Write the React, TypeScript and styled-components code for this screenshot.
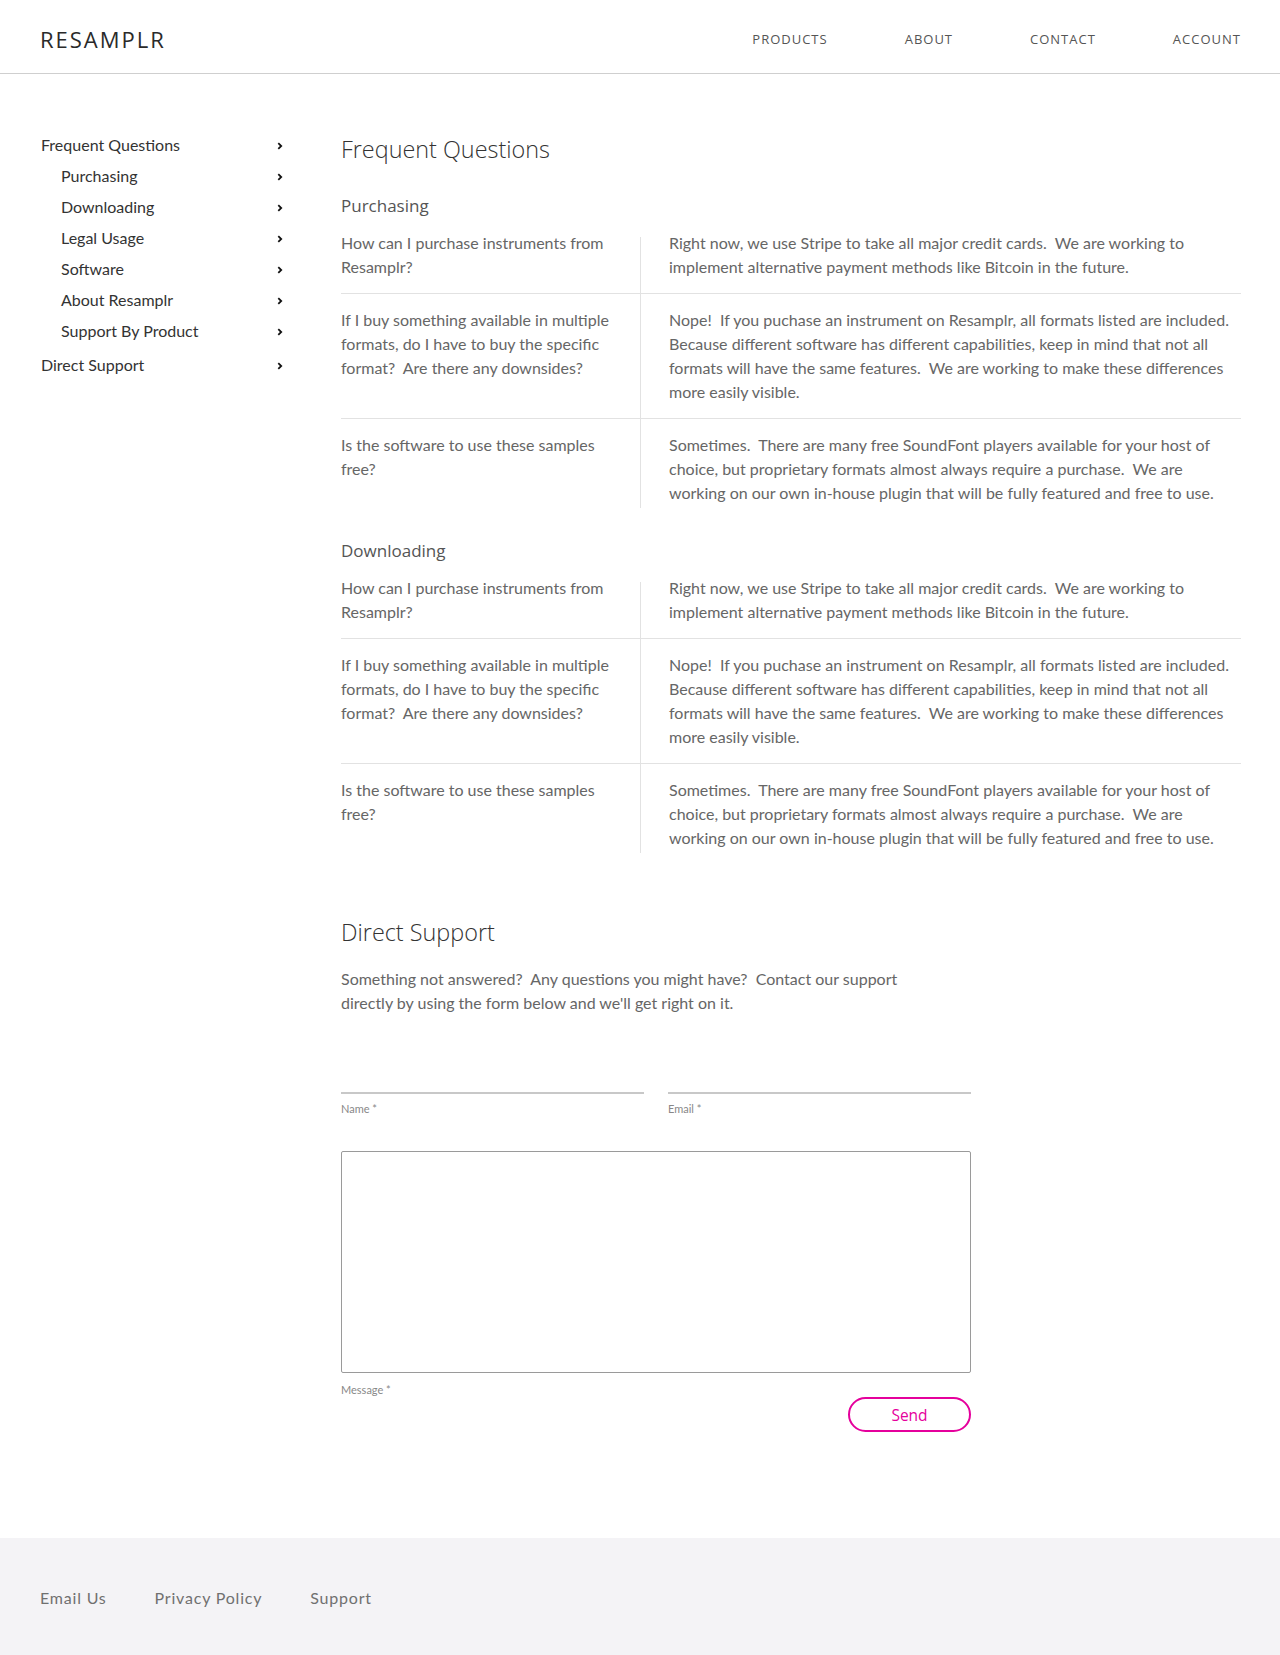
import React from "react";
import styled, { createGlobalStyle } from "styled-components";

const GlobalStyle = createGlobalStyle`
  html, body { margin: 0; padding: 0; background: #fff; }
  body { font-family: "Lato", "Open Sans", sans-serif; color: #333; }
  * { box-sizing: border-box; }
`;

const Header = styled.header`
  height: 74px;
  border-bottom: 1px solid #cfcfcf;
  display: flex;
  align-items: center;
  justify-content: space-between;
  padding: 5px 39px 0 40px;
`;

const Logo = styled.div`
  font-family: "Open Sans", sans-serif;
  font-size: 22px;
  letter-spacing: 2px;
  color: #2a2a2a;
  font-weight: 400;
`;

const Nav = styled.nav`
  display: flex;
  gap: 77px;
`;

const NavLink = styled.a`
  font-family: "Open Sans", sans-serif;
  font-size: 13px;
  letter-spacing: 1px;
  color: #555;
  text-decoration: none;
`;

const Body = styled.div`
  display: flex;
  gap: 60px;
  padding: 55px 39px 106px 41px;
`;

const Sidebar = styled.aside`
  width: 240px;
  flex-shrink: 0;
  display: flex;
  flex-direction: column;
`;

const SideItem = styled.a<{ $indent?: boolean; $gap?: number }>`
  display: flex;
  align-items: center;
  justify-content: space-between;
  height: 31px;
  padding-left: ${(p) => (p.$indent ? "20px" : "0")};
  margin-top: ${(p) => p.$gap ?? 0}px;
  font-size: 16px;
  color: #333;
  text-decoration: none;
`;

const ChevronIcon = styled.svg`
  margin-right: -2px;
  margin-top: 2px;
`;

const Chevron = () => (
  <ChevronIcon width="6" height="8" viewBox="0 0 6 8">
    <path d="M1.3 1.2 L4.2 4 L1.3 6.8" fill="none" stroke="#111" strokeWidth="1.8" />
  </ChevronIcon>
);

const Main = styled.main`
  width: 900px;
  display: flex;
  flex-direction: column;
`;

const H1 = styled.h1<{ $top?: number }>`
  font-family: "Open Sans", sans-serif;
  font-weight: 300;
  font-size: 23.4px;
  line-height: 40px;
  color: #333;
  margin: ${(p) => p.$top ?? 0}px 0 0 0;
`;

const H2 = styled.h2<{ $top: number }>`
  font-family: "Open Sans", sans-serif;
  font-weight: 400;
  font-size: 17px;
  line-height: 26px;
  color: #555;
  margin: ${(p) => p.$top}px 0 12px 0;
`;

const Table = styled.div`
  display: flex;
  flex-direction: column;
`;

const Row = styled.div<{ $last?: boolean }>`
  display: grid;
  grid-template-columns: 299px 1px 1fr;
  border-bottom: ${(p) => (p.$last ? "none" : "1px solid #e2e2e2")};
`;

const Cell = styled.div<{ $first?: boolean; $last?: boolean; $answer?: boolean }>`
  font-size: 16px;
  line-height: 24px;
  color: #666;
  padding: ${(p) => (p.$first ? 0 : 14)}px ${(p) => (p.$answer ? 0 : 16)}px
    ${(p) => (p.$last ? 3 : 14)}px ${(p) => (p.$answer ? 28 : 0)}px;
`;

const Divider = styled.div<{ $first?: boolean }>`
  background: #e2e2e2;
  margin-top: ${(p) => (p.$first ? 6 : 0)}px;
`;

const Paragraph = styled.p`
  font-size: 16px;
  line-height: 24px;
  color: #666;
  max-width: 580px;
  margin: 15px 0 0 0;
`;

const Form = styled.form`
  width: 630px;
  margin-top: 43px;
  display: flex;
  flex-direction: column;
`;

const InputRow = styled.div`
  display: grid;
  grid-template-columns: 1fr 1fr;
  gap: 24px;
`;

const Field = styled.div`
  display: flex;
  flex-direction: column;
`;

const Input = styled.input`
  height: 36px;
  border: none;
  border-bottom: 2px solid #c8c8c8;
  outline: none;
  font-family: "Lato", sans-serif;
  font-size: 15px;
  background: transparent;
`;

const Label = styled.label<{ $top: number }>`
  font-size: 11px;
  line-height: 14px;
  color: #888;
  margin-top: ${(p) => p.$top}px;
`;

const TextArea = styled.textarea`
  margin-top: 35px;
  height: 222px;
  border: 1px solid #9a9a9a;
  border-radius: 2px;
  resize: none;
  font-family: "Lato", sans-serif;
`;

const ButtonRow = styled.div`
  display: flex;
  justify-content: flex-end;
`;

const SendButton = styled.button`
  width: 123px;
  height: 35px;
  border: 2px solid #e5009c;
  border-radius: 18px;
  background: #fff;
  color: #e5009c;
  font-family: "Open Sans", sans-serif;
  font-size: 15.5px;
`;

const Footer = styled.footer`
  height: 118px;
  background: #f4f3f6;
  display: flex;
  align-items: center;
  gap: 48px;
  padding-left: 40px;
`;

const FooterLink = styled.a`
  font-size: 16px;
  letter-spacing: 0.8px;
  color: #707070;
  text-decoration: none;
`;

type QA = { q: string; a: string };

const faqs: QA[] = [
  {
    q: "How can I purchase instruments from Resamplr?",
    a: "Right now, we use Stripe to take all major credit cards.\u00a0 We are working to implement alternative payment methods like Bitcoin in the future.",
  },
  {
    q: "If I buy something available in multiple formats, do I have to buy the specific format?\u00a0 Are there any downsides?",
    a: "Nope!\u00a0 If you puchase an instrument on Resamplr, all formats listed are included.\u00a0 Because different software has different capabilities, keep in mind that not all formats will have the same features.\u00a0 We are working to make these differences more easily visible.",
  },
  {
    q: "Is the software to use these samples free?",
    a: "Sometimes.\u00a0 There are many free SoundFont players available for your host of choice, but proprietary formats almost always require a purchase.\u00a0 We are working on our own in-house plugin that will be fully featured and free to use.",
  },
];

const FaqTable = () => (
  <Table>
    {faqs.map((f, i) => {
      const first = i === 0;
      const last = i === faqs.length - 1;
      return (
        <Row key={i} $last={last}>
          <Cell $first={first} $last={last}>{f.q}</Cell>
          <Divider $first={first} />
          <Cell $first={first} $last={last} $answer>{f.a}</Cell>
        </Row>
      );
    })}
  </Table>
);

const subItems = ["Purchasing", "Downloading", "Legal Usage", "Software", "About Resamplr", "Support By Product"];

export default function App() {
  return (
    <>
      <GlobalStyle />
      <Header>
        <Logo>RESAMPLR</Logo>
        <Nav>
          <NavLink href="#">PRODUCTS</NavLink>
          <NavLink href="#">ABOUT</NavLink>
          <NavLink href="#">CONTACT</NavLink>
          <NavLink href="#">ACCOUNT</NavLink>
        </Nav>
      </Header>
      <Body>
        <Sidebar>
          <SideItem href="#">
            Frequent Questions <Chevron />
          </SideItem>
          {subItems.map((s) => (
            <SideItem key={s} href="#" $indent>
              {s} <Chevron />
            </SideItem>
          ))}
          <SideItem href="#" $gap={3}>
            Direct Support <Chevron />
          </SideItem>
        </Sidebar>
        <Main>
          <H1>Frequent Questions</H1>
          <H2 $top={24}>Purchasing</H2>
          <FaqTable />
          <H2 $top={30}>Downloading</H2>
          <FaqTable />
          <H1 $top={59}>Direct Support</H1>
          <Paragraph>
            Something not answered?&nbsp; Any questions you might have?&nbsp; Contact our support directly by using the
            form below and we'll get right on it.
          </Paragraph>
          <Form onSubmit={(e) => e.preventDefault()}>
            <InputRow>
              <Field>
                <Input type="text" />
                <Label $top={8}>Name *</Label>
              </Field>
              <Field>
                <Input type="email" />
                <Label $top={8}>Email *</Label>
              </Field>
            </InputRow>
            <TextArea />
            <Label $top={10}>Message *</Label>
            <ButtonRow>
              <SendButton type="submit">Send</SendButton>
            </ButtonRow>
          </Form>
        </Main>
      </Body>
      <Footer>
        <FooterLink href="#">Email Us</FooterLink>
        <FooterLink href="#">Privacy Policy</FooterLink>
        <FooterLink href="#">Support</FooterLink>
      </Footer>
    </>
  );
}
